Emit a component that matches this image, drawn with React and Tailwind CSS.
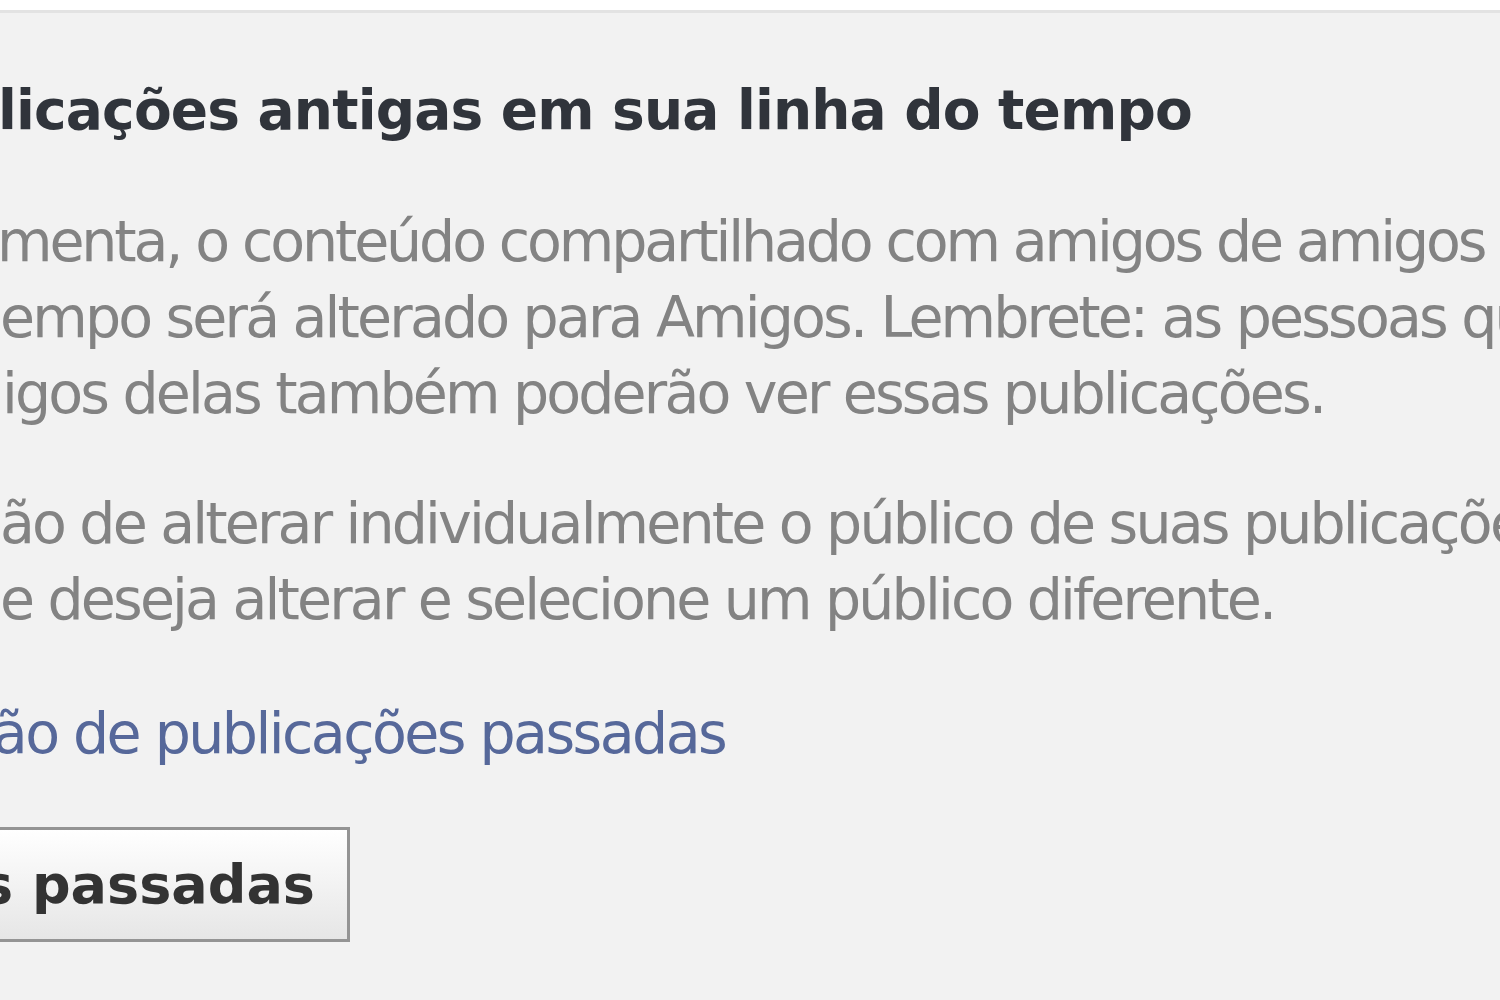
export default function App() {
  const body = "text-[57px] leading-[76px] tracking-[-0.05em] text-[#838383] whitespace-nowrap";
  return (
    <div className="w-[1500px] h-[1000px] overflow-hidden bg-white" style={{ fontFamily: "'DejaVu Sans', Verdana, sans-serif" }}>
      <div className="h-[10px] bg-white" />
      <div className="h-[990px] bg-[#f2f2f2] border-t-[3px] border-[#e3e3e3]">
        <div className="pt-[67px]">
          <div className="text-[55px] leading-[60px] font-bold text-[#30343b] whitespace-nowrap -ml-[2px] tracking-[-0.015em]">
            licações antigas em sua linha do tempo
          </div>
          <div className="mt-[63px]">
            <div className={body + " -ml-[3px] tracking-[-0.055em]"}>menta, o conteúdo compartilhado com amigos de amigos ou</div>
            <div className={body}>empo será alterado para Amigos. Lembrete: as pessoas que</div>
            <div className={body + " pl-[2px]"}>igos delas também poderão ver essas publicações.</div>
          </div>
          <div className="mt-[54px]">
            <div className={body}>ão de alterar individualmente o público de suas publicações,</div>
            <div className={body}>e deseja alterar e selecione um público diferente.</div>
          </div>
          <div className="mt-[58px]">
            <a className="text-[57px] leading-[76px] tracking-[-0.045em] text-[#56689a] whitespace-nowrap block -ml-[36px]">ção de publicações passadas</a>
          </div>
          <div className="mt-[56px] flex">
            <button className="-ml-[60px] h-[115px] pl-[38px] pr-[32px] border-[3px] border-[#949494] bg-gradient-to-b from-white to-[#e6e6e6] text-[54px] font-bold text-[#333] whitespace-nowrap flex items-center">
              s passadas
            </button>
          </div>
        </div>
      </div>
    </div>
  );
}
